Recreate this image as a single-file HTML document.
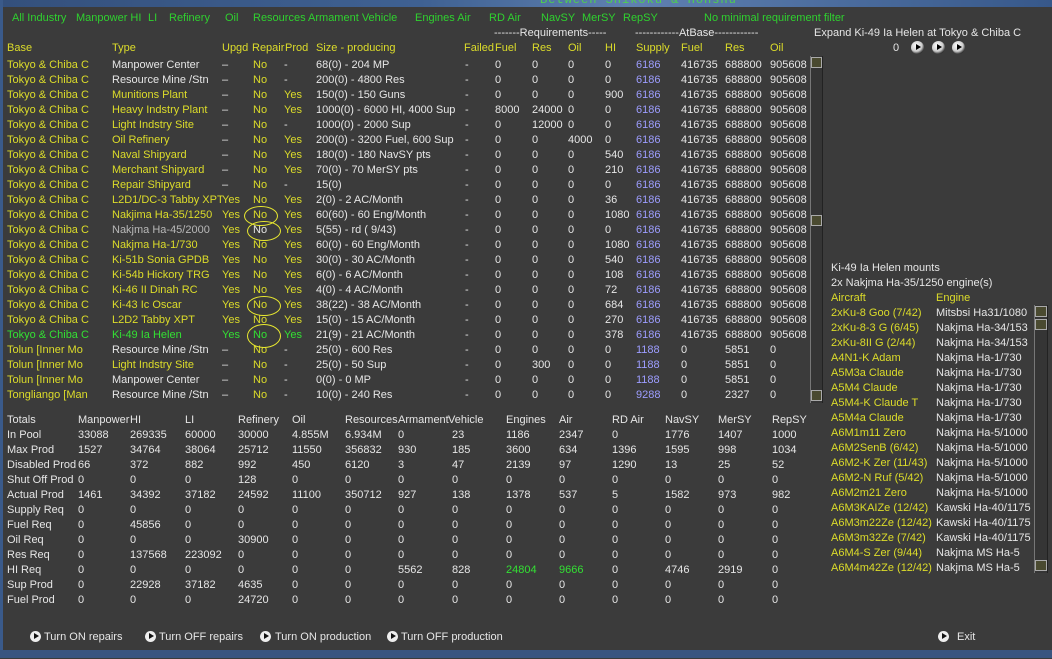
<!DOCTYPE html>
<html><head><meta charset="utf-8"><style>
body{margin:0;width:1052px;height:658px;overflow:hidden;background:#3b3b3b;font-family:"Liberation Sans",sans-serif;font-size:11px;color:#e6e6e6;position:relative}
#w{position:absolute;left:0;top:1px;width:1052px;height:658px}
.a{position:absolute;white-space:nowrap;line-height:13px}
.top{position:absolute;left:0;top:0;width:1052px;height:7px;background:linear-gradient(90deg,#34507c,#3f6192 40%,#5f80b0 60%,#37588a)}
.lb{position:absolute;left:0;top:0;width:3px;height:650px;background:#3a5a8a}
.bb{position:absolute;left:0;top:650px;width:1052px;height:8px;background:#3a5580}
.g{color:#2fd12f}.y{color:#dcdc2a}.w{color:#e6e6e6}.v{color:#9d9dff}.gr{color:#b8b8b8}.gg{color:#33e033}
.r{position:absolute;left:0;height:15px;width:820px}
.r span{position:absolute;white-space:nowrap;line-height:13px}
.r span:nth-child(1){left:7px}.r span:nth-child(2){left:112px}.r span:nth-child(3){left:222px}.r span:nth-child(4){left:253px}.r span:nth-child(5){left:284px}.r span:nth-child(6){left:316px}.r span:nth-child(7){left:465px}.r span:nth-child(8){left:495px}.r span:nth-child(9){left:532px}.r span:nth-child(10){left:568px}.r span:nth-child(11){left:605px}.r span:nth-child(12){left:636px;color:#9d9dff}.r span:nth-child(13){left:681px}.r span:nth-child(14){left:725px}.r span:nth-child(15){left:770px}
.t{position:absolute;left:0;height:15px;width:820px}
.t span{position:absolute;white-space:nowrap;line-height:13px}
.t span:nth-child(1){left:7px}.t span:nth-child(2){left:78px}.t span:nth-child(3){left:130px}.t span:nth-child(4){left:185px}.t span:nth-child(5){left:238px}.t span:nth-child(6){left:292px}.t span:nth-child(7){left:345px}.t span:nth-child(8){left:398px}.t span:nth-child(9){left:452px}.t span:nth-child(10){left:506px}.t span:nth-child(11){left:559px}.t span:nth-child(12){left:612px}.t span:nth-child(13){left:665px}.t span:nth-child(14){left:718px}.t span:nth-child(15){left:772px}
.p{position:absolute;left:0;height:15px;width:1052px}
.p span{position:absolute;white-space:nowrap;line-height:13px}
.p span:nth-child(1){left:831px;color:#dcdc2a}.p span:nth-child(2){left:936px}
.sb{position:absolute;background:#353535;border-left:1px solid #777;border-right:1px solid #222}
.sbtn{position:absolute;width:11px;height:11px;background:#4a4a30;border:1px solid #aaa;box-sizing:border-box}
.ov{position:absolute;border:1px solid #e8e830;border-radius:50%;width:32px;height:18px}
.btn{position:absolute;display:inline-block;width:11px;height:11px;border-radius:50%;background:#eee}
.btn:after{content:"";position:absolute;left:4px;top:2px;border-left:5px solid #111;border-top:3.5px solid transparent;border-bottom:3.5px solid transparent}
.pb{position:absolute;width:13px;height:13px;border-radius:50%;background:radial-gradient(circle at 40% 35%,#fff,#ccc 50%,#111 80%)}
.pb:after{content:"";position:absolute;left:5px;top:3px;border-left:5px solid #000;border-top:3.5px solid transparent;border-bottom:3.5px solid transparent}
</style></head><body>
<div class="top"></div><div class="lb"></div><div class="bb"></div>
<div class="a" style="left:540px;top:-6px;color:#4fd04f;font-family:'Liberation Mono',monospace;font-size:12px;letter-spacing:1px">Between Shikoku &amp; Honshu</div>
<div id="w">
<div class="a g" style="left:12px;top:11px">All Industry</div>
<div class="a g" style="left:76px;top:11px">Manpower HI</div>
<div class="a g" style="left:148px;top:11px">LI</div>
<div class="a g" style="left:169px;top:11px">Refinery</div>
<div class="a g" style="left:225px;top:11px">Oil</div>
<div class="a g" style="left:253px;top:11px">Resources Armament Vehicle</div>
<div class="a g" style="left:415px;top:11px">Engines Air</div>
<div class="a g" style="left:489px;top:11px">RD Air</div>
<div class="a g" style="left:541px;top:11px">NavSY</div>
<div class="a g" style="left:582px;top:11px">MerSY</div>
<div class="a g" style="left:623px;top:11px">RepSY</div>
<div class="a g" style="left:704px;top:11px">No minimal requirement filter</div>

<div class="a w" style="left:494px;top:26px">-------Requirements-----</div>
<div class="a w" style="left:635px;top:26px">------------AtBase------------</div>
<div class="a w" style="left:814px;top:26px">Expand Ki-49 Ia Helen at Tokyo &amp; Chiba C</div>
<div class="a w" style="left:893px;top:41px">0</div>
<div class="pb" style="left:911px;top:40px"></div><div class="pb" style="left:932px;top:40px"></div><div class="pb" style="left:952px;top:40px"></div>

<div class="r y" style="top:41px"><span>Base</span><span>Type</span><span>Upgd</span><span style="left:252px">Repair</span><span style="left:285px">Prod</span><span>Size - producing</span><span style="left:464px">Failed</span><span>Fuel</span><span>Res</span><span>Oil</span><span>HI</span><span style="color:#dcdc2a">Supply</span><span>Fuel</span><span>Res</span><span>Oil</span></div>

<div class="r" style="top:58px"><span class="y">Tokyo &amp; Chiba C</span><span>Manpower Center</span><span>–</span><span class="y">No</span><span>-</span><span>68(0) - 204 MP</span><span>-</span><span>0</span><span>0</span><span>0</span><span>0</span><span>6186</span><span>416735</span><span>688800</span><span>905608</span></div>
<div class="r" style="top:73px"><span class="y">Tokyo &amp; Chiba C</span><span>Resource Mine /Stn</span><span>–</span><span class="y">No</span><span>-</span><span>200(0) - 4800 Res</span><span>-</span><span>0</span><span>0</span><span>0</span><span>0</span><span>6186</span><span>416735</span><span>688800</span><span>905608</span></div>
<div class="r" style="top:88px"><span class="y">Tokyo &amp; Chiba C</span><span class="y">Munitions Plant</span><span>–</span><span class="y">No</span><span class="y">Yes</span><span>150(0) - 150 Guns</span><span>-</span><span>0</span><span>0</span><span>0</span><span>900</span><span>6186</span><span>416735</span><span>688800</span><span>905608</span></div>
<div class="r" style="top:103px"><span class="y">Tokyo &amp; Chiba C</span><span class="y">Heavy Indstry Plant</span><span>–</span><span class="y">No</span><span class="y">Yes</span><span>1000(0) - 6000 HI, 4000 Sup</span><span>-</span><span>8000</span><span>24000</span><span>0</span><span>0</span><span>6186</span><span>416735</span><span>688800</span><span>905608</span></div>
<div class="r" style="top:118px"><span class="y">Tokyo &amp; Chiba C</span><span class="y">Light Indstry Site</span><span>–</span><span class="y">No</span><span>-</span><span>1000(0) - 2000 Sup</span><span>-</span><span>0</span><span>12000</span><span>0</span><span>0</span><span>6186</span><span>416735</span><span>688800</span><span>905608</span></div>
<div class="r" style="top:133px"><span class="y">Tokyo &amp; Chiba C</span><span class="y">Oil Refinery</span><span>–</span><span class="y">No</span><span class="y">Yes</span><span>200(0) - 3200 Fuel, 600 Sup</span><span>-</span><span>0</span><span>0</span><span>4000</span><span>0</span><span>6186</span><span>416735</span><span>688800</span><span>905608</span></div>
<div class="r" style="top:148px"><span class="y">Tokyo &amp; Chiba C</span><span class="y">Naval Shipyard</span><span>–</span><span class="y">No</span><span class="y">Yes</span><span>180(0) - 180 NavSY pts</span><span>-</span><span>0</span><span>0</span><span>0</span><span>540</span><span>6186</span><span>416735</span><span>688800</span><span>905608</span></div>
<div class="r" style="top:163px"><span class="y">Tokyo &amp; Chiba C</span><span class="y">Merchant Shipyard</span><span>–</span><span class="y">No</span><span class="y">Yes</span><span>70(0) - 70 MerSY pts</span><span>-</span><span>0</span><span>0</span><span>0</span><span>210</span><span>6186</span><span>416735</span><span>688800</span><span>905608</span></div>
<div class="r" style="top:178px"><span class="y">Tokyo &amp; Chiba C</span><span class="y">Repair Shipyard</span><span>–</span><span class="y">No</span><span>-</span><span>15(0)</span><span>-</span><span>0</span><span>0</span><span>0</span><span>0</span><span>6186</span><span>416735</span><span>688800</span><span>905608</span></div>
<div class="r" style="top:193px"><span class="y">Tokyo &amp; Chiba C</span><span class="y">L2D1/DC-3 Tabby XPT</span><span class="y">Yes</span><span class="y">No</span><span class="y">Yes</span><span>2(0) - 2 AC/Month</span><span>-</span><span>0</span><span>0</span><span>0</span><span>36</span><span>6186</span><span>416735</span><span>688800</span><span>905608</span></div>
<div class="r" style="top:208px"><span class="y">Tokyo &amp; Chiba C</span><span class="y">Nakjima Ha-35/1250</span><span class="y">Yes</span><span class="y">No</span><span class="y">Yes</span><span>60(60) - 60 Eng/Month</span><span>-</span><span>0</span><span>0</span><span>0</span><span>1080</span><span>6186</span><span>416735</span><span>688800</span><span>905608</span></div>
<div class="r" style="top:223px"><span class="y">Tokyo &amp; Chiba C</span><span class="gr">Nakjma Ha-45/2000</span><span class="y">Yes</span><span>No</span><span class="y">Yes</span><span>5(55) - rd ( 9/43)</span><span>-</span><span>0</span><span>0</span><span>0</span><span>0</span><span>6186</span><span>416735</span><span>688800</span><span>905608</span></div>
<div class="r" style="top:238px"><span class="y">Tokyo &amp; Chiba C</span><span class="y">Nakjma Ha-1/730</span><span class="y">Yes</span><span class="y">No</span><span class="y">Yes</span><span>60(0) - 60 Eng/Month</span><span>-</span><span>0</span><span>0</span><span>0</span><span>1080</span><span>6186</span><span>416735</span><span>688800</span><span>905608</span></div>
<div class="r" style="top:253px"><span class="y">Tokyo &amp; Chiba C</span><span class="y">Ki-51b Sonia GPDB</span><span class="y">Yes</span><span class="y">No</span><span class="y">Yes</span><span>30(0) - 30 AC/Month</span><span>-</span><span>0</span><span>0</span><span>0</span><span>540</span><span>6186</span><span>416735</span><span>688800</span><span>905608</span></div>
<div class="r" style="top:268px"><span class="y">Tokyo &amp; Chiba C</span><span class="y">Ki-54b Hickory TRG</span><span class="y">Yes</span><span class="y">No</span><span class="y">Yes</span><span>6(0) - 6 AC/Month</span><span>-</span><span>0</span><span>0</span><span>0</span><span>108</span><span>6186</span><span>416735</span><span>688800</span><span>905608</span></div>
<div class="r" style="top:283px"><span class="y">Tokyo &amp; Chiba C</span><span class="y">Ki-46 II Dinah RC</span><span class="y">Yes</span><span class="y">No</span><span class="y">Yes</span><span>4(0) - 4 AC/Month</span><span>-</span><span>0</span><span>0</span><span>0</span><span>72</span><span>6186</span><span>416735</span><span>688800</span><span>905608</span></div>
<div class="r" style="top:298px"><span class="y">Tokyo &amp; Chiba C</span><span class="y">Ki-43 Ic Oscar</span><span class="y">Yes</span><span class="y">No</span><span class="y">Yes</span><span>38(22) - 38 AC/Month</span><span>-</span><span>0</span><span>0</span><span>0</span><span>684</span><span>6186</span><span>416735</span><span>688800</span><span>905608</span></div>
<div class="r" style="top:313px"><span class="y">Tokyo &amp; Chiba C</span><span class="y">L2D2 Tabby XPT</span><span class="y">Yes</span><span class="y">No</span><span class="y">Yes</span><span>15(0) - 15 AC/Month</span><span>-</span><span>0</span><span>0</span><span>0</span><span>270</span><span>6186</span><span>416735</span><span>688800</span><span>905608</span></div>
<div class="r" style="top:328px"><span class="gg">Tokyo &amp; Chiba C</span><span class="gg">Ki-49 Ia Helen</span><span class="gg">Yes</span><span class="gg">No</span><span class="gg">Yes</span><span>21(9) - 21 AC/Month</span><span>-</span><span>0</span><span>0</span><span>0</span><span>378</span><span>6186</span><span>416735</span><span>688800</span><span>905608</span></div>
<div class="r" style="top:343px"><span class="y">Tolun [Inner Mo</span><span>Resource Mine /Stn</span><span>–</span><span class="y">No</span><span>-</span><span>25(0) - 600 Res</span><span>-</span><span>0</span><span>0</span><span>0</span><span>0</span><span>1188</span><span>0</span><span>5851</span><span>0</span></div>
<div class="r" style="top:358px"><span class="y">Tolun [Inner Mo</span><span class="y">Light Indstry Site</span><span>–</span><span class="y">No</span><span>-</span><span>25(0) - 50 Sup</span><span>-</span><span>0</span><span>300</span><span>0</span><span>0</span><span>1188</span><span>0</span><span>5851</span><span>0</span></div>
<div class="r" style="top:373px"><span class="y">Tolun [Inner Mo</span><span>Manpower Center</span><span>–</span><span class="y">No</span><span>-</span><span>0(0) - 0 MP</span><span>-</span><span>0</span><span>0</span><span>0</span><span>0</span><span>1188</span><span>0</span><span>5851</span><span>0</span></div>
<div class="r" style="top:388px"><span class="y">Tongliango [Man</span><span>Resource Mine /Stn</span><span>–</span><span class="y">No</span><span>-</span><span>10(0) - 240 Res</span><span>-</span><span>0</span><span>0</span><span>0</span><span>0</span><span>9288</span><span>0</span><span>2327</span><span>0</span></div>

<div class="ov" style="left:244px;top:205px"></div>
<div class="ov" style="left:247px;top:220px"></div>
<div class="ov" style="left:247px;top:295px"></div>
<div class="ov" style="left:247px;top:323px;height:22px"></div>

<div class="sb" style="left:810px;top:55px;width:11px;height:347px"></div>
<div class="sbtn" style="left:811px;top:56px"></div>
<div class="sbtn" style="left:811px;top:214px"></div>
<div class="sbtn" style="left:811px;top:389px"></div>

<div class="t" style="top:413px"><span>Totals</span><span>Manpower</span><span>HI</span><span>LI</span><span>Refinery</span><span>Oil</span><span>Resources</span><span>Armament</span><span style="left:448px">Vehicle</span><span>Engines</span><span>Air</span><span>RD Air</span><span>NavSY</span><span>MerSY</span><span>RepSY</span></div>
<div class="t" style="top:428px"><span>In Pool</span><span>33088</span><span>269335</span><span>60000</span><span>30000</span><span>4.855M</span><span>6.934M</span><span>0</span><span>23</span><span>1186</span><span>2347</span><span>0</span><span>1776</span><span>1407</span><span>1000</span></div>
<div class="t" style="top:443px"><span>Max Prod</span><span>1527</span><span>34764</span><span>38064</span><span>25712</span><span>11550</span><span>356832</span><span>930</span><span>185</span><span>3600</span><span>634</span><span>1396</span><span>1595</span><span>998</span><span>1034</span></div>
<div class="t" style="top:458px"><span>Disabled Prod</span><span>66</span><span>372</span><span>882</span><span>992</span><span>450</span><span>6120</span><span>3</span><span>47</span><span>2139</span><span>97</span><span>1290</span><span>13</span><span>25</span><span>52</span></div>
<div class="t" style="top:473px"><span>Shut Off Prod</span><span>0</span><span>0</span><span>0</span><span>128</span><span>0</span><span>0</span><span>0</span><span>0</span><span>0</span><span>0</span><span>0</span><span>0</span><span>0</span><span>0</span></div>
<div class="t" style="top:488px"><span>Actual Prod</span><span>1461</span><span>34392</span><span>37182</span><span>24592</span><span>11100</span><span>350712</span><span>927</span><span>138</span><span>1378</span><span>537</span><span>5</span><span>1582</span><span>973</span><span>982</span></div>
<div class="t" style="top:503px"><span>Supply Req</span><span>0</span><span>0</span><span>0</span><span>0</span><span>0</span><span>0</span><span>0</span><span>0</span><span>0</span><span>0</span><span>0</span><span>0</span><span>0</span><span>0</span></div>
<div class="t" style="top:518px"><span>Fuel Req</span><span>0</span><span>45856</span><span>0</span><span>0</span><span>0</span><span>0</span><span>0</span><span>0</span><span>0</span><span>0</span><span>0</span><span>0</span><span>0</span><span>0</span></div>
<div class="t" style="top:533px"><span>Oil Req</span><span>0</span><span>0</span><span>0</span><span>30900</span><span>0</span><span>0</span><span>0</span><span>0</span><span>0</span><span>0</span><span>0</span><span>0</span><span>0</span><span>0</span></div>
<div class="t" style="top:548px"><span>Res Req</span><span>0</span><span>137568</span><span>223092</span><span>0</span><span>0</span><span>0</span><span>0</span><span>0</span><span>0</span><span>0</span><span>0</span><span>0</span><span>0</span><span>0</span></div>
<div class="t" style="top:563px"><span>HI Req</span><span>0</span><span>0</span><span>0</span><span>0</span><span>0</span><span>0</span><span>5562</span><span>828</span><span class="gg">24804</span><span class="gg">9666</span><span>0</span><span>4746</span><span>2919</span><span>0</span></div>
<div class="t" style="top:578px"><span>Sup Prod</span><span>0</span><span>22928</span><span>37182</span><span>4635</span><span>0</span><span>0</span><span>0</span><span>0</span><span>0</span><span>0</span><span>0</span><span>0</span><span>0</span><span>0</span></div>
<div class="t" style="top:593px"><span>Fuel Prod</span><span>0</span><span>0</span><span>0</span><span>24720</span><span>0</span><span>0</span><span>0</span><span>0</span><span>0</span><span>0</span><span>0</span><span>0</span><span>0</span><span>0</span></div>

<div class="btn" style="left:30px;top:630px"></div><div class="a" style="left:44px;top:630px">Turn ON repairs</div>
<div class="btn" style="left:145px;top:630px"></div><div class="a" style="left:159px;top:630px">Turn OFF repairs</div>
<div class="btn" style="left:260px;top:630px"></div><div class="a" style="left:275px;top:630px">Turn ON production</div>
<div class="btn" style="left:387px;top:630px"></div><div class="a" style="left:401px;top:630px">Turn OFF production</div>
<div class="btn" style="left:938px;top:630px"></div><div class="a" style="left:957px;top:630px">Exit</div>

<div class="a" style="left:831px;top:261px">Ki-49 Ia Helen mounts</div>
<div class="a" style="left:831px;top:276px">2x Nakjma Ha-35/1250 engine(s)</div>
<div class="p" style="top:291px"><span>Aircraft</span><span style="color:#dcdc2a">Engine</span></div>
<div class="p" style="top:306px"><span>2xKu-8 Goo (7/42)</span><span>Mitsbsi Ha31/1080</span></div>
<div class="p" style="top:321px"><span>2xKu-8-3 G (6/45)</span><span>Nakjma Ha-34/153</span></div>
<div class="p" style="top:336px"><span>2xKu-8II G (2/44)</span><span>Nakjma Ha-34/153</span></div>
<div class="p" style="top:351px"><span>A4N1-K Adam</span><span>Nakjma Ha-1/730</span></div>
<div class="p" style="top:366px"><span>A5M3a Claude</span><span>Nakjma Ha-1/730</span></div>
<div class="p" style="top:381px"><span>A5M4 Claude</span><span>Nakjma Ha-1/730</span></div>
<div class="p" style="top:396px"><span>A5M4-K Claude T</span><span>Nakjma Ha-1/730</span></div>
<div class="p" style="top:411px"><span>A5M4a Claude</span><span>Nakjma Ha-1/730</span></div>
<div class="p" style="top:426px"><span>A6M1m11 Zero</span><span>Nakjma Ha-5/1000</span></div>
<div class="p" style="top:441px"><span>A6M2SenB (6/42)</span><span>Nakjma Ha-5/1000</span></div>
<div class="p" style="top:456px"><span>A6M2-K Zer (11/43)</span><span>Nakjma Ha-5/1000</span></div>
<div class="p" style="top:471px"><span>A6M2-N Ruf (5/42)</span><span>Nakjma Ha-5/1000</span></div>
<div class="p" style="top:486px"><span>A6M2m21 Zero</span><span>Nakjma Ha-5/1000</span></div>
<div class="p" style="top:501px"><span>A6M3KAIZe (12/42)</span><span>Kawski Ha-40/1175</span></div>
<div class="p" style="top:516px"><span>A6M3m22Ze (12/42)</span><span>Kawski Ha-40/1175</span></div>
<div class="p" style="top:531px"><span>A6M3m32Ze (7/42)</span><span>Kawski Ha-40/1175</span></div>
<div class="p" style="top:546px"><span>A6M4-S Zer (9/44)</span><span>Nakjma MS Ha-5</span></div>
<div class="p" style="top:561px"><span>A6M4m42Ze (12/42)</span><span>Nakjma MS Ha-5</span></div>

<div class="sb" style="left:1034px;top:304px;width:12px;height:268px"></div>
<div class="sbtn" style="left:1035px;top:305px;width:12px"></div>
<div class="sbtn" style="left:1035px;top:318px;width:12px"></div>
<div class="sbtn" style="left:1035px;top:559px;width:12px"></div>
</div>
</body></html>
